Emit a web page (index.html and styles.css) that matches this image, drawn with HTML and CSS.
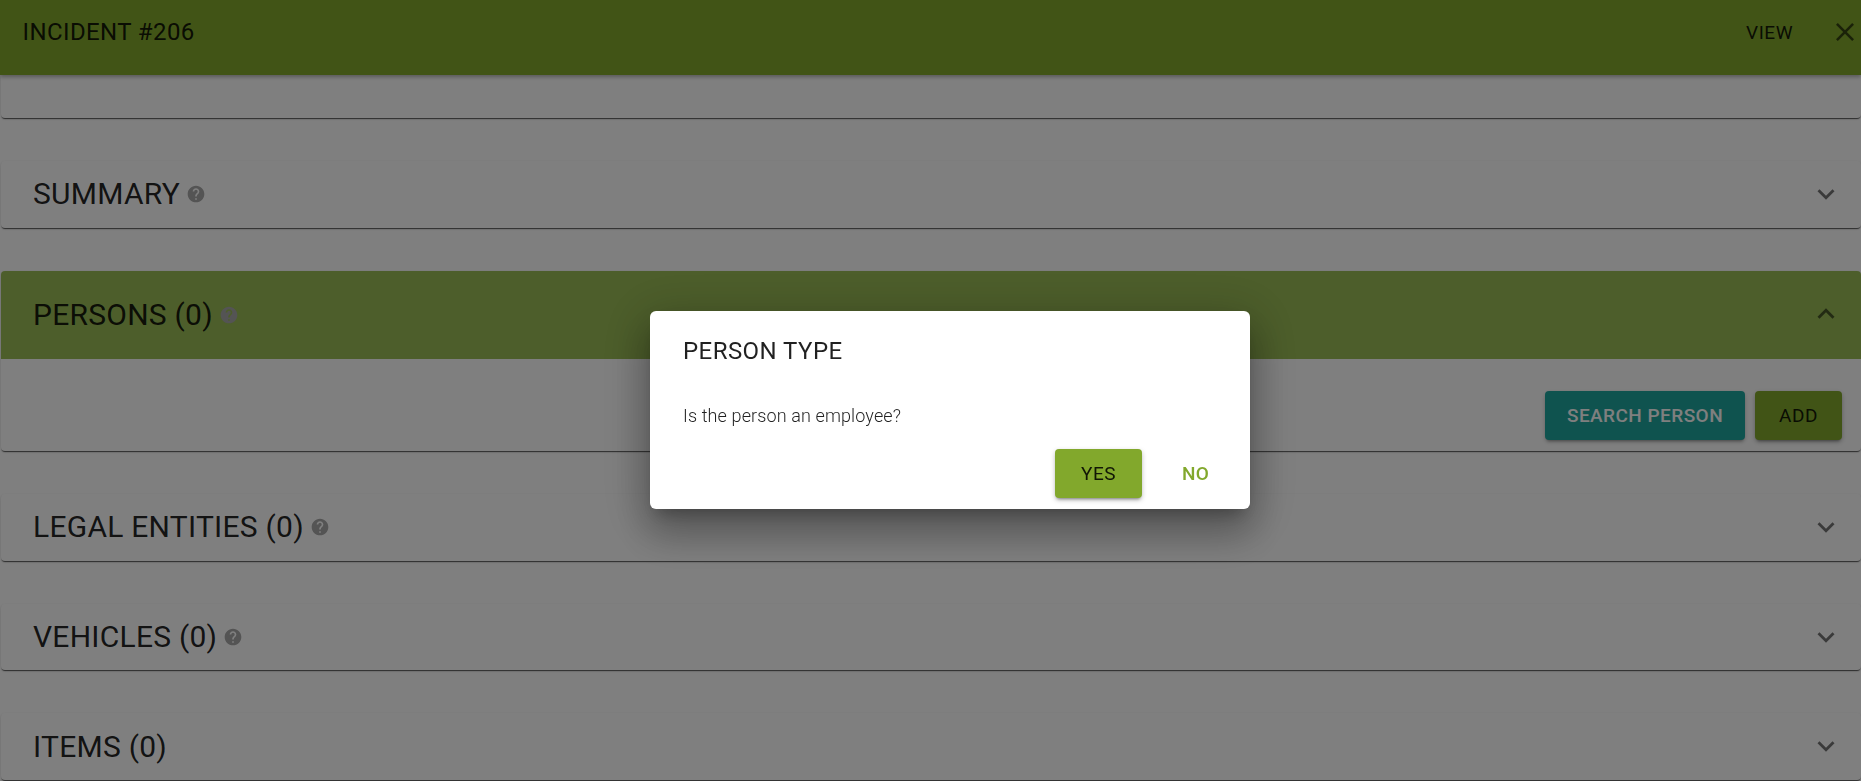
FILE: index.html
```html
<!DOCTYPE html>
<html lang="en">
<head>
  <meta charset="UTF-8" />
  <meta name="viewport" content="width=device-width, initial-scale=1.0"/>
  <title>Incident #206</title>
  <link rel="stylesheet" href="styles.css">
</head>
<body>

<!-- Top bar -->
<header class="app-bar">
  <span class="app-title">INCIDENT #206</span>
  <span class="app-view">VIEW</span>
  <svg class="app-close" viewBox="5 5 14 14"><path d="M19 6.41L17.59 5 12 10.59 6.41 5 5 6.41 10.59 12 5 17.59 6.41 19 12 13.41 17.59 19 19 17.59 13.41 12z"/></svg>
</header>

<!-- Sections -->
<main class="content">
  <section class="panel panel-cut"></section>

  <section class="panel">
    <div class="panel-head">
      <h2>SUMMARY</h2>
      <svg class="help" viewBox="0 0 24 24"><path d="M12 2C6.48 2 2 6.48 2 12s4.48 10 10 10 10-4.48 10-10S17.52 2 12 2zm1 17h-2v-2h2v2zm2.07-7.75l-.9.92C13.45 12.9 13 13.5 13 15h-2v-.5c0-1.1.45-2.1 1.17-2.83l1.24-1.26c.37-.36.59-.86.59-1.41 0-1.1-.9-2-2-2s-2 .9-2 2H8c0-2.21 1.79-4 4-4s4 1.79 4 4c0 .88-.36 1.68-.93 2.25z"/></svg>
      <svg class="chevron" viewBox="0 0 24 24"><path d="M16.59 8.59L12 13.17 7.41 8.59 6 10l6 6 6-6z"/></svg>
    </div>
  </section>

  <section class="panel">
    <div class="panel-head panel-head-open">
      <h2>PERSONS (0)</h2>
      <svg class="help" viewBox="0 0 24 24"><path d="M12 2C6.48 2 2 6.48 2 12s4.48 10 10 10 10-4.48 10-10S17.52 2 12 2zm1 17h-2v-2h2v2zm2.07-7.75l-.9.92C13.45 12.9 13 13.5 13 15h-2v-.5c0-1.1.45-2.1 1.17-2.83l1.24-1.26c.37-.36.59-.86.59-1.41 0-1.1-.9-2-2-2s-2 .9-2 2H8c0-2.21 1.79-4 4-4s4 1.79 4 4c0 .88-.36 1.68-.93 2.25z"/></svg>
      <svg class="chevron" viewBox="0 0 24 24"><path d="M12 8l-6 6 1.41 1.41L12 10.83l4.59 4.58L18 14z"/></svg>
    </div>
    <div class="panel-body">
      <button class="btn btn-teal">SEARCH PERSON</button>
      <button class="btn btn-green">ADD</button>
    </div>
  </section>

  <section class="panel">
    <div class="panel-head">
      <h2>LEGAL ENTITIES (0)</h2>
      <svg class="help" viewBox="0 0 24 24"><path d="M12 2C6.48 2 2 6.48 2 12s4.48 10 10 10 10-4.48 10-10S17.52 2 12 2zm1 17h-2v-2h2v2zm2.07-7.75l-.9.92C13.45 12.9 13 13.5 13 15h-2v-.5c0-1.1.45-2.1 1.17-2.83l1.24-1.26c.37-.36.59-.86.59-1.41 0-1.1-.9-2-2-2s-2 .9-2 2H8c0-2.21 1.79-4 4-4s4 1.79 4 4c0 .88-.36 1.68-.93 2.25z"/></svg>
      <svg class="chevron" viewBox="0 0 24 24"><path d="M16.59 8.59L12 13.17 7.41 8.59 6 10l6 6 6-6z"/></svg>
    </div>
  </section>

  <section class="panel">
    <div class="panel-head">
      <h2>VEHICLES (0)</h2>
      <svg class="help" viewBox="0 0 24 24"><path d="M12 2C6.48 2 2 6.48 2 12s4.48 10 10 10 10-4.48 10-10S17.52 2 12 2zm1 17h-2v-2h2v2zm2.07-7.75l-.9.92C13.45 12.9 13 13.5 13 15h-2v-.5c0-1.1.45-2.1 1.17-2.83l1.24-1.26c.37-.36.59-.86.59-1.41 0-1.1-.9-2-2-2s-2 .9-2 2H8c0-2.21 1.79-4 4-4s4 1.79 4 4c0 .88-.36 1.68-.93 2.25z"/></svg>
      <svg class="chevron" viewBox="0 0 24 24"><path d="M16.59 8.59L12 13.17 7.41 8.59 6 10l6 6 6-6z"/></svg>
    </div>
  </section>

  <section class="panel">
    <div class="panel-head">
      <h2>ITEMS (0)</h2>
      <svg class="chevron" viewBox="0 0 24 24"><path d="M16.59 8.59L12 13.17 7.41 8.59 6 10l6 6 6-6z"/></svg>
    </div>
  </section>
</main>

<!-- Person type dialog -->
<div class="overlay">
  <div class="dialog">
    <h3>PERSON TYPE</h3>
    <p>Is the person an employee?</p>
    <div class="dialog-actions">
      <button class="btn btn-green">YES</button>
      <button class="btn btn-text">NO</button>
    </div>
  </div>
</div>

</body>
</html>
```

FILE: styles.css
```css
html, body {
  height: 100%;
}

body {
  margin: 0;
  overflow: hidden;
  font-family: Roboto, sans-serif;
  background: #fff;
  color: rgba(0, 0, 0, 0.87);
}

/* Top bar */
.app-bar {
  position: relative;
  z-index: 2;
  height: 75px;
  padding: 0 7px 11px 22.5px;
  box-sizing: border-box;
  display: flex;
  align-items: center;
  background: #82a82c;
  box-shadow: 0 2px 4px rgba(0, 0, 0, 0.3);
}

.app-title {
  flex: 1;
  font-size: 24px;
  font-weight: 400;
  letter-spacing: 0.4px;
}

.app-view {
  font-size: 19px;
  font-weight: 400;
  letter-spacing: 0.5px;
  margin-right: 43px;
}

.app-close {
  width: 18px;
  height: 18px;
  fill: rgba(0, 0, 0, 0.6);
}

/* Sections */
.panel {
  margin: 0 0 43px 1px;
  border-radius: 4px;
  background: #fff;
  box-shadow: 0 2px 1px -1px rgba(0, 0, 0, 0.5), 0 1px 1px 0 rgba(0, 0, 0, 0.2), 0 1px 3px 0 rgba(0, 0, 0, 0.12);
}

.panel-cut {
  height: 43px;
  border-radius: 0 0 4px 4px;
}

.panel-head {
  height: 66.7px;
  padding: 0 18px 0 32px;
  display: flex;
  align-items: center;
  gap: 6px;
}

.panel-head h2 {
  margin: 0;
  font-size: 30px;
  font-weight: 400;
  line-height: 1;
  letter-spacing: 0.25px;
}

.panel-head-open {
  height: 88px;
  background: #9abc56;
  border-radius: 4px 4px 0 0;
}

.help {
  width: 20px;
  height: 20px;
  fill: #a8a8a8;
}

.chevron {
  width: 34px;
  height: 34px;
  margin: 0 0 1px auto;
  fill: rgba(0, 0, 0, 0.54);
}

.panel-body {
  height: 92.3px;
  padding: 32px 19px 0 0;
  box-sizing: border-box;
  display: flex;
  justify-content: flex-end;
  gap: 10px;
}

/* Buttons */
.btn {
  height: 49px;
  min-width: 87px;
  padding: 0 18px;
  border: none;
  border-radius: 4px;
  font-family: inherit;
  font-size: 19px;
  font-weight: 400;
  letter-spacing: 0.5px;
  cursor: pointer;
}

.btn-teal {
  width: 200px;
  background: #1ea69e;
  color: #fff;
  font-weight: 500;
  letter-spacing: 0.45px;
  box-shadow: 0 3px 3px -2px rgba(0, 0, 0, 0.3), 0 2px 4px rgba(0, 0, 0, 0.2);
}

.btn-green {
  background: #82a82c;
  color: rgba(0, 0, 0, 0.87);
  box-shadow: 0 3px 3px -2px rgba(0, 0, 0, 0.35), 0 2px 5px rgba(0, 0, 0, 0.25);
}

.btn-text {
  background: none;
  color: #82a82c;
  font-weight: 500;
  letter-spacing: 0.3px;
}

/* Dialog */
.overlay {
  position: fixed;
  inset: 0;
  z-index: 10;
  background: rgba(0, 0, 0, 0.5);
}

.dialog {
  width: 600px;
  height: 198px;
  margin: 311px 0 0 650px;
  padding: 25px 11px 11px 33px;
  box-sizing: border-box;
  display: flex;
  flex-direction: column;
  border-radius: 6px;
  background: #fff;
  box-shadow: 0 11px 15px -7px rgba(0, 0, 0, 0.25), 0 24px 38px 3px rgba(0, 0, 0, 0.22), 0 9px 46px 8px rgba(0, 0, 0, 0.18);
}

.dialog h3 {
  margin: 0;
  font-size: 24px;
  font-weight: 400;
  line-height: 30px;
  letter-spacing: 0.45px;
}

.dialog p {
  margin: 38px 0 0;
  font-size: 18px;
  font-weight: 300;
  line-height: 24px;
  letter-spacing: 0.12px;
  color: rgba(0, 0, 0, 0.87);
}

.dialog-actions {
  margin-top: auto;
  display: flex;
  justify-content: flex-end;
  gap: 10px;
}
```
